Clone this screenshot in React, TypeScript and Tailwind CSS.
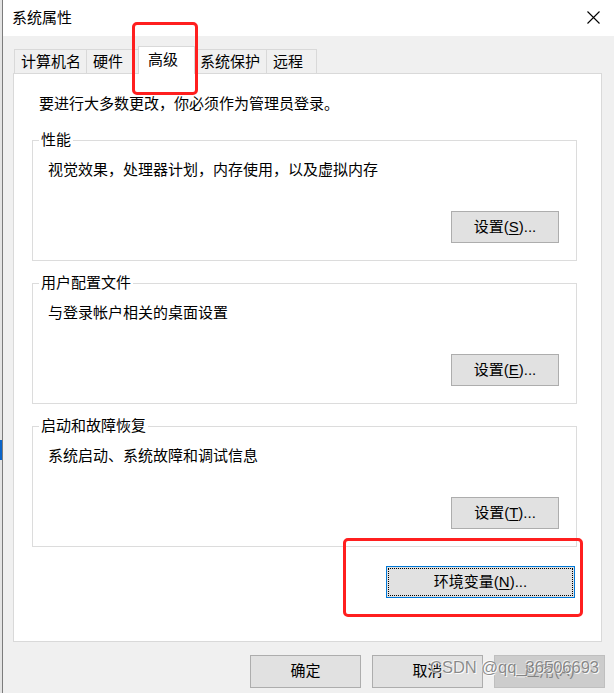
import React from "react";

const tabs = [
  { label: "计算机名", w: "w-[72px] pl-[6px] border-l" },
  { label: "硬件", w: "w-[52px] pl-[6px] border-l" },
  { label: "高级", w: "w-[57px] pl-[9px] border-l border-r", active: true },
  { label: "系统保护", w: "w-[71px] pl-[5px]" },
  { label: "远程", w: "w-[51px] pl-[6px] border-l border-r" },
];

const groups = [
  { title: "性能", desc: "视觉效果，处理器计划，内存使用，以及虚拟内存", key: "S" },
  { title: "用户配置文件", desc: "与登录帐户相关的桌面设置", key: "E" },
  { title: "启动和故障恢复", desc: "系统启动、系统故障和调试信息", key: "T" },
];

const SettingsButton = ({ k }: { k: string }) => (
  <button className="w-[108px] h-[32px] bg-[#e1e1e1] border border-[#adadad] text-[15px] text-black flex items-center justify-center">
    设置(<span className="underline underline-offset-2">{k}</span>)...
  </button>
);

const App = () => {
  return (
    <div className="relative w-[614px] h-[693px] overflow-hidden bg-[#f0f0f0] flex font-['Liberation_Sans','Noto_Sans_CJK_SC',sans-serif] text-black">
      {/* bit of the window behind */}
      <div className="flex w-[3px] shrink-0">
        <div className="w-[2px] bg-[#e4e4e4] flex flex-col">
          <div className="h-[440px]" />
          <div className="h-[20px] bg-[#0a64c8]" />
        </div>
        <div className="w-px bg-[#7c7c7c]" />
      </div>

      <div className="flex-1 flex flex-col">
        {/* title bar */}
        <div className="h-[36px] bg-white flex items-center justify-between pl-[9px] pr-[14px]">
          <span className="text-[15px] leading-[20px]">系统属性</span>
          <svg width="13" height="13" viewBox="0 0 13 13" className="mt-[-1px]">
            <path d="M0.5 0.5 L12.5 12.5 M12.5 0.5 L0.5 12.5" stroke="#000" strokeWidth="1.1" fill="none" />
          </svg>
        </div>

        <div className="pl-[10px] pr-[12px] pt-[10px]">
          {/* tabs */}
          <div className="flex items-end ml-px">
            {tabs.map((t) =>
              t.active ? (
                <div
                  key={t.label}
                  className={`relative z-10 -mb-px h-[28px] bg-white border-t border-[#d9d9d9] flex items-center text-[15px] ${t.w}`}
                >
                  {t.label}
                </div>
              ) : (
                <div
                  key={t.label}
                  className={`h-[24px] border-t border-[#d9d9d9] flex items-center text-[15px] pt-px ${t.w}`}
                >
                  {t.label}
                </div>
              )
            )}
          </div>

          {/* panel */}
          <div className="h-[569px] bg-white border border-[#d9d9d9] pt-[20px] flex flex-col">
            <p className="pl-[25px] text-[15px] leading-[20px]">要进行大多数更改，你必须作为管理员登录。</p>

            <div className="ml-[18px] w-[545px] mt-[16px] flex flex-col gap-[12px]">
              {groups.map((g) => (
                <fieldset key={g.title} className="border border-[#dcdcdc] m-0 p-0">
                  <legend className="ml-[6px] px-[2px] text-[15px] leading-[20px]">{g.title}</legend>
                  <p className="pl-[15px] mt-[10px] text-[15px] leading-[20px]">{g.desc}</p>
                  <div className="flex justify-end pr-[17px] mt-[31px] pb-[17px]">
                    <SettingsButton k={g.key} />
                  </div>
                </fieldset>
              ))}
            </div>

            <div className="flex justify-end pr-[26px] mt-[19px]">
              <button className="w-[189px] h-[32px] bg-[#e1e1e1] border border-[#0078d7] p-px">
                <div className="w-full h-full border border-dotted border-black flex items-center justify-center text-[15px]">
                  环境变量(<span className="underline underline-offset-2">N</span>)...
                </div>
              </button>
            </div>
          </div>

          {/* dialog buttons */}
          <div className="flex justify-end gap-[11px] mt-[13px] -mr-[3px]">
            <button className="w-[111px] h-[33px] bg-[#e1e1e1] border border-[#adadad] text-[15px]">确定</button>
            <button className="w-[111px] h-[33px] bg-[#e1e1e1] border border-[#adadad] text-[15px]">取消</button>
            <button className="w-[111px] h-[33px] bg-[#cccccc] border border-[#bfbfbf] text-[15px] text-[#838383]">
              应用(A)
            </button>
          </div>
        </div>
      </div>

      {/* red annotation boxes */}
      <div className="absolute left-[132px] top-[22px] w-[66px] h-[73px] border-[3px] border-[#ff1f1f] rounded-[5px]" />
      <div className="absolute left-[343px] top-[538px] w-[240px] h-[79px] border-[3px] border-[#ff1f1f] rounded-[5px]" />

      {/* watermark */}
      <div className="absolute left-[430px] top-[656px] text-[16.5px] leading-[22px] text-[rgba(105,105,105,0.75)] [text-shadow:1px_1px_0_rgba(255,255,255,0.9),-1px_-1px_0_rgba(255,255,255,0.6)] font-['Liberation_Sans',sans-serif]">
        CSDN @qq_36506693
      </div>
    </div>
  );
};

export default App;
